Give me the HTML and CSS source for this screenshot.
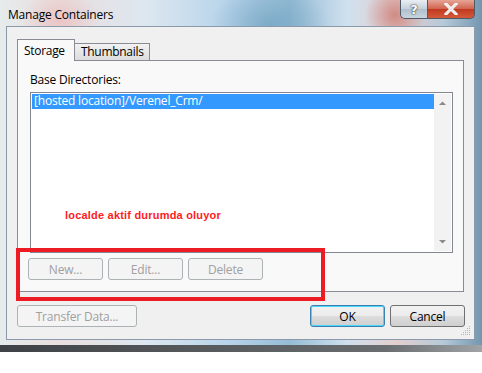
FILE: index.html
```html
<!DOCTYPE html>
<html>
<head>
<meta charset="utf-8">
<link rel="stylesheet" href="styles.css">
</head>
<body>
<div class="screen">
  <div class="window">
    <div class="titlebar">
      <div class="title">Manage Containers</div>
      <div class="caption">
        <div class="cap help">?</div>
        <div class="cap close">
          <svg width="16" height="12" viewBox="0 0 16 12"><path d="M3 1 L13 11 M13 1 L3 11" stroke="#fff" stroke-width="3" stroke-linecap="square"/><path d="M3 1 L13 11 M13 1 L3 11" stroke="#e8e8e8" stroke-width="1.5"/></svg>
        </div>
      </div>
    </div>
    <div class="client">
      <div class="tabs">
        <div class="tab active">Storage</div>
        <div class="tab">Thumbnails</div>
      </div>
      <div class="panel">
        <div class="label">Base Directories:</div>
        <div class="listbox">
          <div class="items">
            <div class="item selected">[hosted location]/Verenel_Crm/</div>
          </div>
          <div class="scrollbar">
            <svg width="17" height="10" viewBox="0 0 17 10"><path d="M5 7 L8.5 3.5 L12 7 Z" fill="#8a8a8a"/></svg>
            <svg width="17" height="10" viewBox="0 0 17 10"><path d="M5 3 L8.5 6.5 L12 3 Z" fill="#8a8a8a"/></svg>
          </div>
          <div class="note">localde aktif durumda oluyor</div>
        </div>
        <div class="btnrow">
          <div class="btn disabled">New...</div>
          <div class="btn disabled">Edit...</div>
          <div class="btn disabled">Delete</div>
        </div>
        <div class="redbox"></div>
      </div>
      <div class="footer">
        <div class="btn disabled wide">Transfer Data...</div>
        <div class="right">
          <div class="btn default">OK</div>
          <div class="btn">Cancel</div>
        </div>
      </div>
      <svg class="grip" width="10" height="10" viewBox="0 0 10 10">
        <g fill="#b4b4b4">
          <rect x="8" y="0" width="1" height="1"/>
          <rect x="6" y="2" width="1" height="1"/><rect x="8" y="2" width="1" height="1"/>
          <rect x="4" y="4" width="1" height="1"/><rect x="6" y="4" width="1" height="1"/><rect x="8" y="4" width="1" height="1"/>
          <rect x="2" y="6" width="1" height="1"/><rect x="4" y="6" width="1" height="1"/><rect x="6" y="6" width="1" height="1"/><rect x="8" y="6" width="1" height="1"/>
          <rect x="0" y="8" width="1" height="1"/><rect x="2" y="8" width="1" height="1"/><rect x="4" y="8" width="1" height="1"/><rect x="6" y="8" width="1" height="1"/><rect x="8" y="8" width="1" height="1"/>
        </g>
      </svg>
    </div>
  </div>
  <div class="strip"></div>
</div>
</body>
</html>
```

FILE: styles.css
```css
html, body {
  margin: 0;
  padding: 0;
  background: #ffffff;
}
body {
  width: 482px;
  height: 373px;
  overflow: hidden;
  font-family: "Open Sans", "Noto Sans", sans-serif;
  font-size: 11px;
  color: #000;
}
.screen {
  width: 482px;
  height: 352px;
  display: flex;
  flex-direction: column;
}
.window {
  height: 345px;
  display: flex;
  flex-direction: column;
  background:
    radial-gradient(ellipse 40px 30px at 60px 20px, rgba(235,190,190,0.8), rgba(235,190,190,0)),
    radial-gradient(ellipse 30px 30px at 395px 15px, rgba(200,110,100,0.7), rgba(200,110,100,0)),
    radial-gradient(ellipse 60px 40px at 270px 25px, rgba(110,160,190,0.7), rgba(110,160,190,0)),
    linear-gradient(to right, #e6ebec 0%, #e9dede 12%, #dde7f0 30%, #b6d3ea 48%, #95bcd6 60%, #cfe0ee 72%, #e4cfcf 82%, #b6c9d8 92%, #7396b0 100%);
}
.titlebar {
  height: 26px;
  display: flex;
  justify-content: space-between;
  align-items: flex-start;
}
.title {
  margin: 6px 0 0 8px;
  font-size: 12px;
  letter-spacing: -0.2px;
  color: #000;
}
.caption {
  display: flex;
  margin-right: 7px;
  height: 19px;
}
.cap {
  height: 18px;
  border: 1px solid #4f5a67;
  border-top: none;
  display: flex;
  align-items: center;
  justify-content: center;
}
.help {
  width: 26px;
  border-radius: 0 0 0 5px;
  border-right: none;
  background: linear-gradient(#e9eef3, #c5d0db 50%, #b1bfcc 51%, #c7d5e0);
  color: #fff;
  font-weight: bold;
  font-size: 13px;
  font-family: "DejaVu Sans", sans-serif;
  text-shadow: 0 0 2px #333, 0 0 1px #333;
}
.close {
  width: 46px;
  border-radius: 0 0 5px 0;
  background: linear-gradient(#e6a597, #d0634f 50%, #c0391f 51%, #d45a3a);
}
.client {
  margin-left: 6px;
  width: 469px;
  height: 314px;
  box-sizing: border-box;
  border: 1px solid #8a9aab;
  background: #f0f0f0;
  padding: 13px 12px 0 10px;
  position: relative;
}
.tabs {
  display: flex;
  align-items: flex-end;
  height: 20px;
  position: relative;
  z-index: 1;
}
.tab {
  height: 16px;
  padding: 0 5px 0 6px;
  border: 1px solid #898c95;
  border-bottom: none;
  background: linear-gradient(#f2f2f2, #dcdcdc);
  font-size: 12px;
  line-height: 16px;
  letter-spacing: -0.3px;
  margin-left: -1px;
}
.tab.active {
  margin-left: 0;
  background: #f9f9f9;
  padding: 0 6px 0 6px;
  line-height: 22px;
  width: 44px;
  margin-bottom: -1px;
  height: 21px;
}
.panel {
  width: 447px;
  height: 232px;
  box-sizing: border-box;
  border: 1px solid #898c95;
  background: #f9f9f9;
  padding: 11px 10px 0 12px;
  position: relative;
}
.label {
  font-size: 12px;
  letter-spacing: -0.2px;
  height: 20px;
  line-height: 16px;
}
.listbox {
  width: 423px;
  height: 161px;
  box-sizing: border-box;
  border: 1px solid #828790;
  background: #fff;
  display: flex;
  padding: 1px;
  position: relative;
}
.items {
  flex: 1;
}
.item {
  height: 15px;
  line-height: 14px;
  padding-left: 2px;
  font-size: 12px;
  letter-spacing: -0.2px;
}
.item.selected {
  background: #3399ff;
  color: #fff;
}
.scrollbar {
  width: 17px;
  background: #f2f2f2;
  display: flex;
  flex-direction: column;
  justify-content: space-between;
  padding: 4px 0 4px;
}
.scrollbar svg { display: block; }
.note {
  position: absolute;
  left: 34px;
  top: 116px;
  color: #ff1c1c;
  font-family: "Liberation Sans", Arial, sans-serif;
  font-weight: bold;
  font-size: 11px;
  letter-spacing: 0.2px;
}
.btnrow {
  display: flex;
  gap: 5px;
  margin-top: 5px;
  margin-left: -2px;
}
.btn {
  width: 75px;
  height: 22px;
  box-sizing: border-box;
  border: 1px solid #707070;
  border-radius: 3px;
  background: linear-gradient(#f2f2f2 0%, #ebebeb 50%, #dddddd 51%, #cfcfcf 100%);
  display: flex;
  align-items: center;
  justify-content: center;
  font-size: 12px;
  letter-spacing: -0.2px;
}
.btn.disabled {
  border-color: #adb2b5;
  background: #f4f4f4;
  color: #a0a0a0;
}
.btn.wide { width: 120px; }
.btn.default {
  border-color: #3c7fb1;
  box-shadow: inset 0 0 0 1px #48d8fb;
}
.redbox {
  position: absolute;
  left: -2px;
  top: 187px;
  width: 301px;
  height: 45px;
  border: 4px solid #ed1c24;
}
.footer {
  display: flex;
  justify-content: space-between;
  margin-top: 13px;
  width: 448px;
}
.right {
  display: flex;
  gap: 5px;
}
.grip {
  position: absolute;
  right: 3px;
  bottom: 3px;
}
.strip {
  height: 7px;
  background: linear-gradient(to right, #3e4246, #55595c 40%, #6a6d70 80%, #a0a4a7);
}
```
